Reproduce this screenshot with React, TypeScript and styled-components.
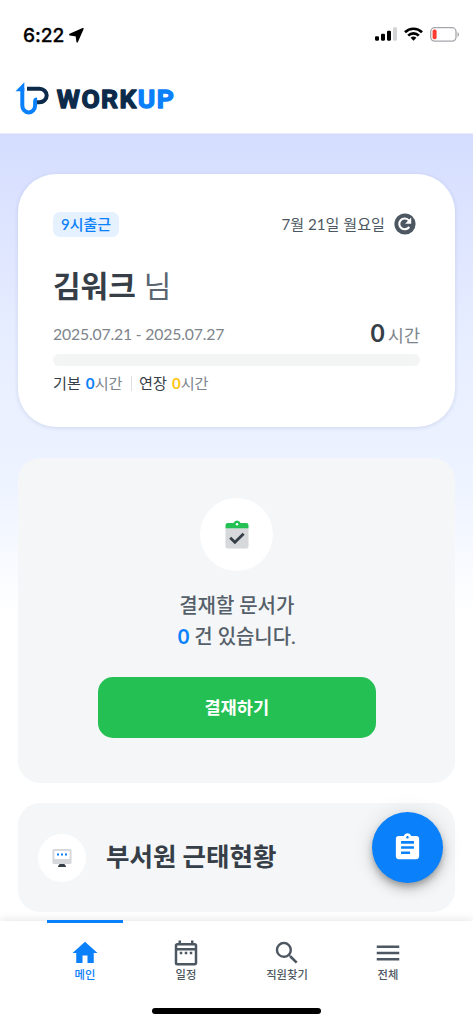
import React from "react";
import styled, { createGlobalStyle, css } from "styled-components";
import {
  MdAssignment,
  MdHome,
  MdMenu,
  MdOutlineDateRange,
  MdSearch,
} from "react-icons/md";

const color = {
  blue: "#0a80fb",
  green: "#25c054",
  navy: "#0c2b4b",
  ink: "#363e47",
  slate: "#4d5761",
  gray: "#7d848b",
  panel: "#f4f6f8",
};

const GlobalStyle = createGlobalStyle`
  * { box-sizing: border-box; }
  body {
    margin: 0;
    background: #fff;
    font-family: Lato, "Noto Sans CJK KR", sans-serif;
    color: ${color.ink};
  }
`;

const Screen = styled.div`
  display: flex;
  flex-direction: column;
  width: 473px;
  height: 1024px;
  overflow: hidden;
  position: relative;
  background: #fff;
`;

const StatusBar = styled.div`
  display: flex;
  justify-content: space-between;
  align-items: center;
  height: 68px;
  flex: none;
  padding: 0 13px 0 23px;
`;

const Clock = styled.div`
  display: flex;
  align-items: center;
  gap: 5px;
  padding-top: 2px;
  font: 500 19.2px/24px Inter, sans-serif;
  letter-spacing: -0.1px;
  color: #000;
  -webkit-text-stroke: 0.3px;
`;

const StatusIcons = styled.div`
  display: flex;
  align-items: center;
  gap: 7px;
`;

const Header = styled.header`
  display: flex;
  align-items: center;
  height: 66px;
  flex: none;
  padding-left: 15px;
  border-bottom: 1px solid #e9edfb;
`;

const Content = styled.main`
  flex: 1;
  min-height: 0;
  display: flex;
  flex-direction: column;
  padding: 40px 18px 0 17.5px;
  background: linear-gradient(#d5ddff 0, #e7eeff 210px, #edf3ff 350px, #fff 480px);
`;

const ProfileCard = styled.section`
  height: 253px;
  flex: none;
  padding: 37px 35px 0 35.5px;
  border-radius: 38px;
  background: #fff;
  box-shadow: 0 1px 4px rgba(60, 80, 140, 0.16);
`;

const Row = styled.div<{ $h: number; $mt?: number }>`
  display: flex;
  align-items: center;
  justify-content: space-between;
  height: ${(p) => p.$h}px;
  margin-top: ${(p) => p.$mt ?? 0}px;
  white-space: nowrap;
`;

const ShiftBadge = styled.span`
  width: 66px;
  height: 25px;
  border-radius: 7px;
  background: #e5f1ff;
  color: ${color.blue};
  font-size: 15px;
  font-weight: 500;
  line-height: 24px;
  text-align: center;
`;

const Today = styled.div`
  display: flex;
  align-items: center;
  gap: 9px;
  padding-right: 4px;
  font-size: 15.1px;
  line-height: 24px;
  color: ${color.slate};
`;

const Name = styled.h1`
  margin: -2px 0 0;
  font-size: 30px;
  line-height: 40px;
  font-weight: 700;
`;

const Honorific = styled.span`
  margin-left: 8px;
  font-weight: 400;
  color: #5a6570;
`;

const Period = styled.span`
  margin-top: -2px;
  font-size: 15.8px;
  line-height: 24px;
  letter-spacing: -0.18px;
  color: ${color.gray};
`;

const Total = styled.span`
  margin-top: -2px;
  font-size: 17.5px;
  line-height: 30px;
  color: ${color.gray};
  b {
    margin-right: 3px;
    font-size: 24.5px;
    color: ${color.ink};
  }
`;

const Track = styled.div`
  height: 12px;
  margin-top: 4px;
  border-radius: 6px;
  background: #f3f5f5;
`;

const Breakdown = styled.div`
  display: flex;
  align-items: center;
  height: 24px;
  margin-top: 5px;
  font-size: 15.15px;
  line-height: 24px;
`;

const Hours = styled.span<{ $accent: string }>`
  margin-left: 5px;
  color: ${color.gray};
  b {
    color: ${(p) => p.$accent};
  }
`;

const Divider = styled.i`
  width: 1.5px;
  height: 15px;
  margin: 0 7px 0 8px;
  background: #dde0e3;
`;

const panel = css`
  flex: none;
  border-radius: 22px;
  background: ${color.panel};
`;

const ApprovalCard = styled.section`
  ${panel}
  display: flex;
  flex-direction: column;
  align-items: center;
  height: 325px;
  margin-top: 31px;
  padding: 40px 0 0 1px;
`;

const RoundIcon = styled.div<{ $size: number }>`
  display: flex;
  align-items: center;
  justify-content: center;
  width: ${(p) => p.$size}px;
  height: ${(p) => p.$size}px;
  border-radius: 50%;
  background: #fff;
`;

const ApprovalText = styled.p`
  margin: 19px 0 0;
  font-size: 20px;
  line-height: 31px;
  letter-spacing: -0.05px;
  font-weight: 500;
  text-align: center;
  color: #555f69;
  b {
    color: ${color.blue};
  }
`;

const ApproveButton = styled.button`
  width: 278px;
  height: 61px;
  margin-top: 25px;
  padding: 0 0 2px;
  border: 0;
  border-radius: 15px;
  background: ${color.green};
  color: #fff;
  font-family: inherit;
  font-size: 17.6px;
  font-weight: 700;
`;

const TeamCard = styled.section`
  ${panel}
  display: flex;
  align-items: center;
  gap: 20px;
  height: 109px;
  margin-top: 20px;
  padding-left: 20.5px;
`;

const TeamTitle = styled.h2`
  margin: -3px 0 0;
  font-size: 25.5px;
  line-height: 36px;
  font-weight: 700;
`;

const Fab = styled.button`
  position: absolute;
  left: 372px;
  top: 812px;
  display: flex;
  align-items: center;
  justify-content: center;
  width: 71px;
  height: 71px;
  padding: 0 0 1px;
  border: 0;
  border-radius: 50%;
  background: ${color.blue};
  color: #fff;
  box-shadow: 0 4px 6px -1px rgba(0, 0, 0, 0.25), 0 7px 12px rgba(0, 0, 0, 0.14),
    0 1px 22px rgba(0, 0, 0, 0.12);
`;

const BottomNav = styled.nav`
  position: relative;
  flex: none;
  height: 103px;
  background: #fff;
  box-shadow: 0 -1px 9px rgba(0, 0, 0, 0.11);
`;

const Tabs = styled.div`
  display: flex;
  justify-content: center;
  gap: 25px;
`;

const Tab = styled.div<{ $active?: boolean }>`
  display: flex;
  flex-direction: column;
  align-items: center;
  width: 76px;
  height: 80px;
  padding-top: 15px;
  margin-top: -1px;
  border-top: 3px solid ${(p) => (p.$active ? color.blue : "transparent")};
  color: ${(p) => (p.$active ? color.blue : color.slate)};
  font-size: 11.3px;
  font-weight: 500;
  line-height: 16px;
  white-space: nowrap;
  svg {
    flex: none;
    margin-bottom: -1px;
  }
`;

const HomeIndicator = styled.div`
  position: absolute;
  bottom: 10px;
  left: 152px;
  width: 169px;
  height: 6px;
  border-radius: 3px;
  background: #000;
`;

const LogoMark = styled.svg`
  margin-top: -1px;
`;

const Logo = () => (
  <LogoMark width="162" height="36" viewBox="0 0 162 36">
    <path
      d="M12 6.8H24.5a7.2 6.7 0 0 1 0 13.4H20"
      fill="none"
      stroke={color.navy}
      strokeWidth="4"
    />
    <path
      d="M7.3 6V23.5a6.4 7 0 0 0 12.8 0V19.5a2 2 0 0 1 2-2"
      fill="none"
      stroke={color.blue}
      strokeWidth="4"
    />
    <path d="M.5 9.2 9.3.3V9.2Z" fill={color.blue} />
    <text
      x="41.8"
      y="26.3"
      textLength="117"
      lengthAdjust="spacing"
      fontFamily="Roboto"
      fontSize="26.5"
      fontWeight="700"
      strokeWidth="1.3"
      strokeLinejoin="round"
    >
      <tspan fill={color.navy} stroke={color.navy}>WORK</tspan>
      <tspan fill={color.blue} stroke={color.blue}>UP</tspan>
    </text>
  </LogoMark>
);

const LocationArrow = () => (
  <svg width="15" height="15" viewBox="0 0 15 15">
    <path
      d="M.9 6.6 13.9.8 8.2 13.7 7.4 7.6Z"
      fill="#000"
      stroke="#000"
      strokeWidth="1.6"
      strokeLinejoin="round"
    />
  </svg>
);

const Signal = () => (
  <svg width="22" height="14" viewBox="0 0 22 14">
    <rect x="0" y="9.2" width="4" height="4.5" rx="1.1" />
    <rect x="6" y="6.7" width="4" height="7" rx="1.1" />
    <rect x="12" y="3.7" width="4" height="10" rx="1.1" />
    <rect x="18" y="0.3" width="4" height="13.4" rx="1.1" fill="#d2d3d5" />
  </svg>
);

const Wifi = () => (
  <svg width="19" height="14" viewBox="0 0 19 14" fill="none" stroke="#000" strokeWidth="2.7">
    <path d="M1 5.2a12.2 12.2 0 0 1 17 0" />
    <path d="M4.2 8.6a7.6 7.6 0 0 1 10.6 0" />
    <path d="m9.5 13.7-2.9-2.9a4.2 4.2 0 0 1 5.8 0Z" fill="#000" stroke="none" />
  </svg>
);

const Battery = () => (
  <svg width="30" height="15" viewBox="0 0 30 15">
    <rect x=".7" y=".7" width="25.3" height="13.4" rx="4" fill="none" stroke="#a5a6aa" strokeWidth="1.3" />
    <rect x="2.6" y="2.6" width="4" height="9.6" rx="1.6" fill="#ff3b30" />
    <path d="M27.5 5v5a2.8 2.8 0 0 0 0-5Z" fill="#a5a6aa" />
  </svg>
);

const Refresh = () => (
  <svg width="22" height="22" viewBox="0 0 22 22">
    <circle cx="11" cy="11" r="10.6" fill={color.slate} />
    <path d="M15.2 13.8A5.4 5.4 0 1 1 14.6 7.1L15.6 8.1" fill="none" stroke="#fff" strokeWidth="2.1" />
    <path d="M17.2 4.6V10.7H11.1Z" fill="#fff" />
  </svg>
);

const Clipboard = () => (
  <svg width="24" height="29" viewBox="0 0 24 29">
    <path d="M.5 8H23.5V25.9a2.5 2.5 0 0 1-2.5 2.5H3a2.5 2.5 0 0 1-2.5-2.5Z" fill="#d6d8dc" />
    <path
      d="M.5 8.3V5.3A2.3 2.3 0 0 1 2.8 3H8.5a3.7 3.7 0 0 1 7 0h5.7a2.3 2.3 0 0 1 2.3 2.3V8.3Z"
      fill={color.green}
    />
    <circle cx="12" cy="4.2" r="1.2" fill="#fff" />
    <path d="m5.2 17.8 4.7 4.5 8.7-8.6" fill="none" stroke={color.ink} strokeWidth="2.8" />
  </svg>
);

const Monitor = () => (
  <svg width="20" height="20" viewBox="0 0 20 20">
    <path d="M8 15.5h4l2 2.7v.8H6v-.8Z" fill={color.ink} />
    <rect x=".4" y="1" width="19.2" height="15" rx="1.6" fill="#d6d8dc" />
    <rect x="2.4" y="3" width="15.2" height="8" rx=".5" fill="#fff" />
    <path d="M5 5.6h2v2H5zM9 5.6h2v2H9zM13 5.6h2v2h-2z" fill={color.blue} />
  </svg>
);

export default function App() {
  return (
    <>
      <GlobalStyle />
      <Screen>
        <StatusBar>
          <Clock>
            6:22
            <LocationArrow />
          </Clock>
          <StatusIcons>
            <Signal />
            <Wifi />
            <Battery />
          </StatusIcons>
        </StatusBar>
        <Header>
          <Logo />
        </Header>
        <Content>
          <ProfileCard>
            <Row $h={26}>
              <ShiftBadge>9시출근</ShiftBadge>
              <Today>
                7월 21일 월요일
                <Refresh />
              </Today>
            </Row>
            <Row $h={40} $mt={29}>
              <Name>
                김워크
                <Honorific>님</Honorific>
              </Name>
            </Row>
            <Row $h={30} $mt={14}>
              <Period>2025.07.21 - 2025.07.27</Period>
              <Total>
                <b>0</b>시간
              </Total>
            </Row>
            <Track />
            <Breakdown>
              기본
              <Hours $accent={color.blue}>
                <b>0</b>시간
              </Hours>
              <Divider />
              연장
              <Hours $accent="#ffc414">
                <b>0</b>시간
              </Hours>
            </Breakdown>
          </ProfileCard>
          <ApprovalCard>
            <RoundIcon $size={73}>
              <Clipboard />
            </RoundIcon>
            <ApprovalText>
              결재할 문서가
              <br />
              <b>0</b> 건 있습니다.
            </ApprovalText>
            <ApproveButton>결재하기</ApproveButton>
          </ApprovalCard>
          <TeamCard>
            <RoundIcon $size={48}>
              <Monitor />
            </RoundIcon>
            <TeamTitle>부서원 근태현황</TeamTitle>
          </TeamCard>
        </Content>
        <BottomNav>
          <Tabs>
            <Tab $active>
              <MdHome size={30} />
              메인
            </Tab>
            <Tab>
              <MdOutlineDateRange size={30} />
              일정
            </Tab>
            <Tab>
              <MdSearch size={30} />
              직원찾기
            </Tab>
            <Tab>
              <MdMenu size={30} />
              전체
            </Tab>
          </Tabs>
          <HomeIndicator />
        </BottomNav>
        <Fab>
          <MdAssignment size={31} />
        </Fab>
      </Screen>
    </>
  );
}
